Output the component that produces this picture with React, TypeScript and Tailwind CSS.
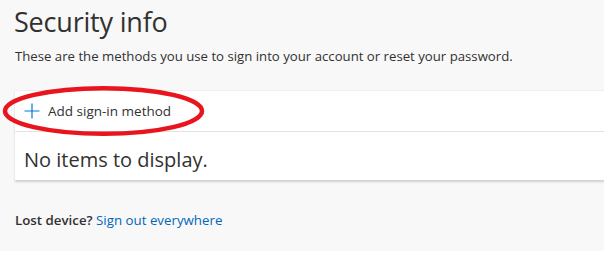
import React from 'react';

const font = { fontFamily: '"Open Sans", "Noto Sans", sans-serif' };

const PlusIcon = () => (
  <svg width="16" height="16" viewBox="0 0 16 16" className="shrink-0">
    <path d="M8 0.5v15M0.5 8h15" stroke="#0078d4" strokeWidth="1.2" fill="none" />
  </svg>
);

const App = () => {
  return (
    <div className="w-[604px] h-[258px] bg-white overflow-hidden text-[#323130]" style={font}>
      <div className="h-[251px] bg-[#f8f8f8] pl-[15px] pt-[4px]">
        <h1 className="text-[27px] leading-[36px] font-normal -ml-[1px] tracking-[-0.2px]">Security info</h1>
        <p className="text-[13.2px] leading-[17px] mt-[8px]">
          These are the methods you use to sign into your account or reset your password.
        </p>

        {/* methods card */}
        <div className="relative mt-[25px] w-[620px] bg-white border-t border-[#eeeeee] shadow-[0_1.5px_2px_rgba(0,0,0,0.16)]">
          <div className="h-[41px] flex items-center gap-[8px] pl-[9px] border-b border-[#e3e3e3]">
            <PlusIcon />
            <span className="text-[13.5px]">Add sign-in method</span>
          </div>
          <div className="h-[48px] pl-[9px] pt-[14px]">
            <span className="block text-[20px] leading-[28px]">No items to display.</span>
          </div>

          {/* red marker circle */}
          <svg
            className="absolute left-[-15px] top-[-8px] pointer-events-none"
            width="220"
            height="60"
            viewBox="0 0 220 60"
          >
            <ellipse cx="103.5" cy="28" rx="98.5" ry="22.8" fill="none" stroke="#e8151f" strokeWidth="4.5" />
          </svg>
        </div>

        <p className="mt-[30px] text-[13.3px] leading-[20px]">
          <span className="font-semibold">Lost device?</span>{' '}
          <a href="#" className="text-[#0067b8]">Sign out everywhere</a>
        </p>
      </div>
    </div>
  );
};

export default App;
